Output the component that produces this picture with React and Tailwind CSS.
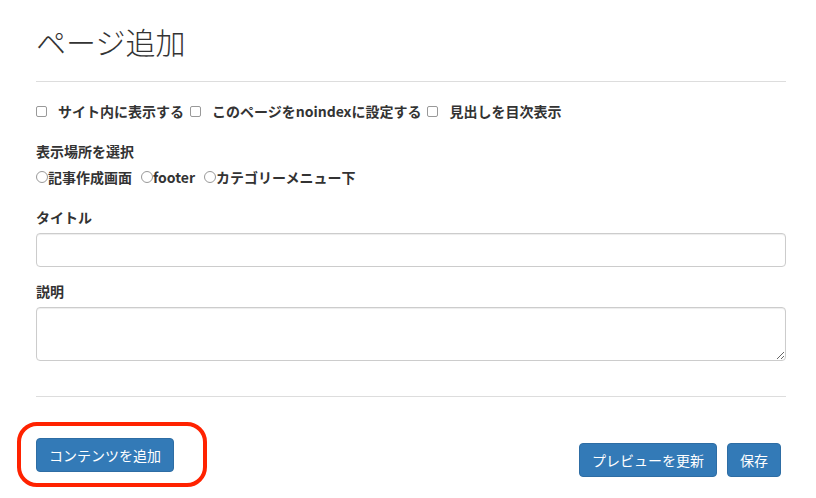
export default function App() {
  const checks = ['サイト内に表示する', 'このページをnoindexに設定する', '見出しを目次表示'];
  const places = ['記事作成画面', 'footer', 'カテゴリーメニュー下'];

  return (
    <div className="min-h-[498px] bg-white text-[#333] pl-[36px] pr-[30px] pt-[25px] font-['Noto_Sans_CJK_JP','Noto_Sans',sans-serif]">
      <h1 className="text-[30px] leading-[33px] font-light">ページ追加</h1>
      <hr className="mt-[23px] border-0 border-t border-[#ddd]" />

      <div className="mt-[19px] flex items-center h-[20px] text-[14px] font-bold">
        {checks.map((c, i) => (
          <label key={c} className={`flex items-center ${i > 0 ? 'ml-[6px]' : ''}`}>
            <span className="w-[11px] h-[11px] border border-[#999] rounded-[2px] bg-white"></span>
            <span className="ml-[11px]">{c}</span>
          </label>
        ))}
      </div>

      <div className="mt-[20px] text-[14px] leading-[20px] font-bold">表示場所を選択</div>
      <div className="mt-[6px] flex items-center h-[20px] text-[14px] font-bold">
        {places.map((p, i) => (
          <label key={p} className={`flex items-center ${i > 0 ? 'ml-[9px]' : ''}`}>
            <span className="w-[12px] h-[12px] rounded-full border border-[#999] bg-white"></span>
            <span>{p}</span>
          </label>
        ))}
      </div>

      <div className="mt-[20px] text-[14px] leading-[20px] font-bold">タイトル</div>
      <input
        type="text"
        className="mt-[6px] block w-full h-[34px] border border-[#ccc] rounded-[4px] shadow-[inset_0_1px_1px_rgba(0,0,0,0.075)] outline-none px-3"
      />

      <div className="mt-[14px] text-[14px] leading-[20px] font-bold">説明</div>
      <textarea
        className="mt-[6px] block w-full h-[54px] border border-[#ccc] rounded-[4px] shadow-[inset_0_1px_1px_rgba(0,0,0,0.075)] outline-none px-3 py-1"
      ></textarea>

      <hr className="mt-[35px] border-0 border-t border-[#ddd]" />

      <div className="mt-[41px] flex items-start justify-between">
        <div className="relative">
          <button className="h-[34px] px-[12px] bg-[#337ab7] border border-[#2e6da4] rounded-[4px] text-white text-[14px]">
            コンテンツを追加
          </button>
          <div className="absolute -left-[19px] -top-[16px] -right-[33px] -bottom-[15px] border-[4px] border-[#ff2200] rounded-[20px] pointer-events-none"></div>
        </div>
        <div className="mt-[5px] mr-[5px] flex gap-[10px]">
          <button className="h-[34px] px-[12px] bg-[#337ab7] border border-[#2e6da4] rounded-[4px] text-white text-[14px]">
            プレビューを更新
          </button>
          <button className="h-[34px] px-[12px] bg-[#337ab7] border border-[#2e6da4] rounded-[4px] text-white text-[14px]">
            保存
          </button>
        </div>
      </div>
    </div>
  );
}
